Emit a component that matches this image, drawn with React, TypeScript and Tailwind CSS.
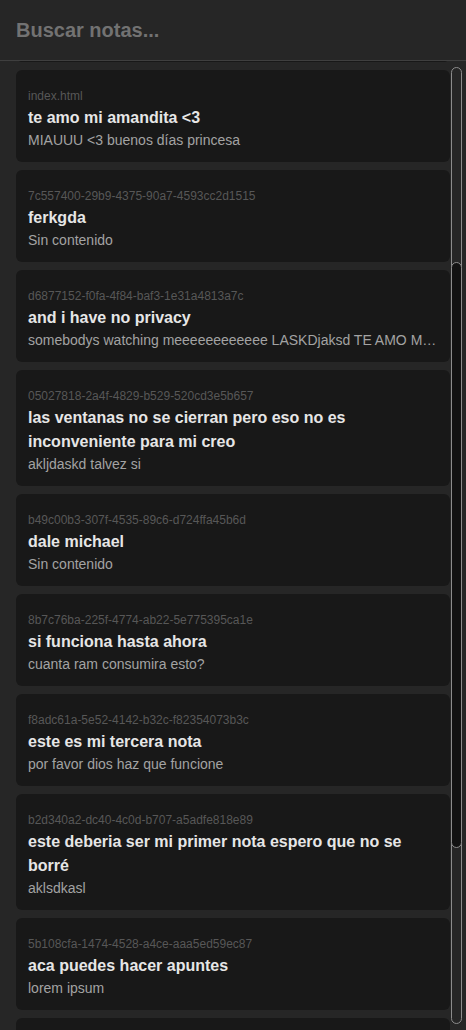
import { useLayoutEffect, useRef, useState } from "react";

type Note = { id: string; title: string; body: string };

const notes: Note[] = [
  { id: "1f9a2c44-8d3e-4b71-a0c2-77e1d9b0f3aa", title: "lista de compras", body: "leche, pan, huevos" },
  { id: "c3e81b09-5a6f-4e2d-9b14-0d8f6a2e41c7", title: "ideas", body: "Sin contenido" },
  {
    id: "9e0d7f12-b4a8-4c35-8e61-3a2f9c5d7b08",
    title: "cosas que tengo que recordar para el fin de semana que viene",
    body: "llamar a mamá",
  },
  { id: "index.html", title: "te amo mi amandita <3", body: "MIAUUU <3 buenos días princesa" },
  { id: "7c557400-29b9-4375-90a7-4593cc2d1515", title: "ferkgda", body: "Sin contenido" },
  {
    id: "d6877152-f0fa-4f84-baf3-1e31a4813a7c",
    title: "and i have no privacy",
    body: "somebodys watching meeeeeeeeeeee LASKDjaksd TE AMO MUCHO AMANDITA",
  },
  {
    id: "05027818-2a4f-4829-b529-520cd3e5b657",
    title: "las ventanas no se cierran pero eso no es inconveniente para mi creo",
    body: "akljdaskd talvez si",
  },
  { id: "b49c00b3-307f-4535-89c6-d724ffa45b6d", title: "dale michael", body: "Sin contenido" },
  { id: "8b7c76ba-225f-4774-ab22-5e775395ca1e", title: "si funciona hasta ahora", body: "cuanta ram consumira esto?" },
  { id: "f8adc61a-5e52-4142-b32c-f82354073b3c", title: "este es mi tercera nota", body: "por favor dios haz que funcione" },
  {
    id: "b2d340a2-dc40-4c0d-b707-a5adfe818e89",
    title: "este deberia ser mi primer nota espero que no se borré",
    body: "aklsdkasl",
  },
  { id: "5b108cfa-1474-4528-a4ce-aaa5ed59ec87", title: "aca puedes hacer apuntes", body: "lorem ipsum" },
  { id: "0a6e3d51-7c29-4f8b-9d02-e5b1c48a6f19", title: "hola", body: "Sin contenido" },
  { id: "e4f27b80-1d6c-49a3-b5e7-2c8d0f931a64", title: "prueba", body: "Sin contenido" },
  { id: "6d1c9a37-e82b-4f05-a4d6-91b3e7f02c58", title: "nota nueva", body: "Sin contenido" },
];

function NoteCard({ note }: { note: Note }) {
  return (
    <div data-id={note.id} className="rounded-md bg-[#181818] px-3 pt-4 pb-3">
      <div className="text-xs leading-5 text-[#575757]">{note.id}</div>
      <div className="text-base font-bold leading-6 text-[#e6e6e6]">{note.title}</div>
      <div className="truncate text-sm leading-5 text-[#a3a3a3]">{note.body}</div>
    </div>
  );
}

export default function App() {
  const listRef = useRef<HTMLDivElement>(null);
  const trackRef = useRef<HTMLDivElement>(null);
  const [thumb, setThumb] = useState({ top: 0, height: 0 });

  const syncThumb = () => {
    const list = listRef.current;
    const track = trackRef.current;
    if (!list || !track) return;
    const len = track.clientHeight;
    setThumb({
      top: (list.scrollTop / list.scrollHeight) * len,
      height: (list.clientHeight / list.scrollHeight) * len,
    });
  };

  useLayoutEffect(() => {
    const list = listRef.current;
    if (!list) return;
    const first = list.querySelector<HTMLElement>('[data-id="index.html"]');
    if (first) list.scrollTop = first.offsetTop - 9;
    syncThumb();
  }, []);

  return (
    <div className="flex h-screen flex-col bg-[#262626] font-['Liberation_Sans',Arial,sans-serif]">
      <div className="border-b border-[#3f3f3f]">
        <input
          type="text"
          placeholder="Buscar notas..."
          className="w-full bg-transparent p-4 text-xl font-bold leading-7 text-[#e6e6e6] outline-none placeholder:text-[#727272]"
        />
      </div>
      <div className="flex min-h-0 flex-1 pl-4 pr-1">
        <div
          ref={listRef}
          onScroll={syncThumb}
          className="relative flex-1 overflow-y-auto [scrollbar-width:none]"
        >
          <div className="flex flex-col gap-2 py-2">
            {notes.map((n) => (
              <NoteCard key={n.id} note={n} />
            ))}
          </div>
        </div>
        <div className="ml-px w-[11px] py-1.5">
          <div ref={trackRef} className="relative h-full rounded-full border border-[#8c8c8c]">
            <div
              className="absolute -inset-x-px rounded-full border border-[#8c8c8c] bg-[#121212]"
              style={{ top: thumb.top - 1, height: thumb.height }}
            />
          </div>
        </div>
      </div>
    </div>
  );
}
